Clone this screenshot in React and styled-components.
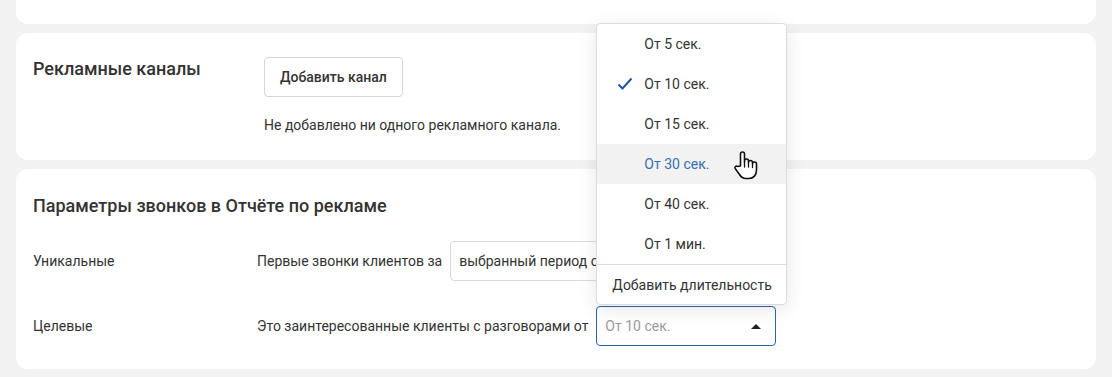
import React from 'react';
import styled, { createGlobalStyle } from 'styled-components';

const GlobalStyle = createGlobalStyle`
  body {
    margin: 0;
    background: #f1f2f1;
    font-family: Roboto, "Liberation Sans", sans-serif;
    color: #333;
  }
`;

const Page = styled.div`
  display: flex;
  flex-direction: column;
  gap: 9px;
  padding: 0 16px 9px;
  min-height: 377px;
  box-sizing: border-box;
  background: #f1f2f1;
`;

const TopCard = styled.div`
  height: 24px;
  background: #fff;
  border-radius: 0 0 12px 12px;
`;

const Card = styled.section`
  background: #fff;
  border-radius: 12px;
  padding: ${({ $pad }) => $pad};
`;

const ChannelsGrid = styled.div`
  display: grid;
  grid-template-columns: 231px 1fr;
`;

const Title = styled.h2`
  margin: 0;
  font-size: 18px;
  line-height: 24px;
  font-weight: 500;
  color: #333;
`;

const ChannelsBody = styled.div`
  display: flex;
  flex-direction: column;
  align-items: flex-start;
  gap: 18px;
`;

const Button = styled.button`
  height: 40px;
  padding: 0 15px;
  background: #fff;
  border: 1px solid #d6d6d6;
  border-radius: 4px;
  font-family: inherit;
  font-size: 14px;
  font-weight: 500;
  color: #333;
`;

const Text = styled.p`
  margin: 0;
  font-size: 14px;
  line-height: 20px;
  color: #333;
`;

const Rows = styled.div`
  display: flex;
  flex-direction: column;
  gap: 25px;
  margin-top: 23px;
`;

const Row = styled.div`
  display: grid;
  grid-template-columns: 224px 1fr;
  align-items: center;
  font-size: 14px;
`;

const Field = styled.div`
  display: flex;
  align-items: center;
  gap: 8px;
`;

const SelectWrap = styled.div`
  position: relative;
`;

const Select = styled.div`
  display: flex;
  align-items: center;
  justify-content: space-between;
  box-sizing: border-box;
  width: ${({ $width }) => $width}px;
  height: 40px;
  padding: 0 14px 0 8px;
  border: 1px solid ${({ $open }) => ($open ? '#2f62ad' : '#dadada')};
  border-radius: 4px;
  font-size: 14px;
  color: ${({ $placeholder }) => ($placeholder ? '#9a9a9a' : '#333')};
  white-space: nowrap;
  overflow: hidden;
`;

const Caret = styled.span`
  width: 0;
  height: 0;
  border-left: 5px solid transparent;
  border-right: 5px solid transparent;
  border-bottom: 5px solid #222;
`;

const Menu = styled.div`
  position: absolute;
  left: 0;
  bottom: calc(100% + 1px);
  box-sizing: border-box;
  width: 191px;
  background: #fff;
  border: 1px solid #dcdcdc;
  border-radius: 4px;
  box-shadow: 0 4px 18px rgba(0, 0, 0, 0.1);
  z-index: 5;
`;

const Option = styled.div`
  position: relative;
  height: 40px;
  display: flex;
  align-items: center;
  padding-left: 47px;
  font-size: 14px;
  color: ${({ $hover }) => ($hover ? '#3a6db3' : '#333')};
  background: ${({ $hover }) => ($hover ? '#f1f2f1' : 'transparent')};
`;

const Check = styled.svg`
  position: absolute;
  left: 20px;
  top: 13px;
`;

const AddRow = styled.div`
  height: 39px;
  display: flex;
  align-items: center;
  padding-left: 15px;
  border-top: 1px solid #dcdcdc;
  font-size: 14px;
  color: #333;
`;

const Cursor = styled.svg`
  position: absolute;
  left: 135px;
  top: 126px;
`;

const options = ['От 5 сек.', 'От 10 сек.', 'От 15 сек.', 'От 30 сек.', 'От 40 сек.', 'От 1 мин.'];

const HandCursor = () => (
  <Cursor width="26" height="30" viewBox="0 0 26 30">
    <path
      d="M8.5 16 V4 a2 2 0 0 1 4 0 V12 V11 a2 2 0 0 1 4 0 V12.5 a2 2 0 0 1 4 0 V14 a2 2 0 0 1 4 0 V20 c0 5 -3 8.5 -7.5 8.5 H14 c-3 0 -5 -1.5 -6.5 -4 L3.2 18.5 c-1 -1.5 0.8 -3.2 2.3 -2 Z"
      fill="#fff"
      stroke="#111"
      strokeWidth="1.6"
      strokeLinejoin="round"
    />
    <path d="M12.5 12 V17 M16.5 13 V17 M20.5 14.5 V17.5" stroke="#111" strokeWidth="1.3" strokeLinecap="round" />
  </Cursor>
);

const App = () => (
  <>
    <GlobalStyle />
    <Page>
      <TopCard />
      <Card $pad="24px 17px 25px">
        <ChannelsGrid>
          <Title>Рекламные каналы</Title>
          <ChannelsBody>
            <Button>Добавить канал</Button>
            <Text>Не добавлено ни одного рекламного канала.</Text>
          </ChannelsBody>
        </ChannelsGrid>
      </Card>
      <Card $pad="25px 17px 23px">
        <Title>Параметры звонков в Отчёте по рекламе</Title>
        <Rows>
          <Row>
            <span>Уникальные</span>
            <Field>
              <span>Первые звонки клиентов за</span>
              <Select $width={300}>
                выбранный период отчёта
                <Caret />
              </Select>
            </Field>
          </Row>
          <Row>
            <span>Целевые</span>
            <Field>
              <span>Это заинтересованные клиенты с разговорами от</span>
              <SelectWrap>
                <Select $width={180} $open $placeholder>
                  От 10 сек.
                  <Caret />
                </Select>
                <Menu>
                  {options.map((o, i) => (
                    <Option key={o} $hover={i === 3}>
                      {i === 1 && (
                        <Check width="16" height="14" viewBox="0 0 16 14">
                          <path d="M1.5 7.5 L5.5 11.5 L14.5 1.5" fill="none" stroke="#1f56a8" strokeWidth="2" />
                        </Check>
                      )}
                      {o}
                    </Option>
                  ))}
                  <AddRow>Добавить длительность</AddRow>
                  <HandCursor />
                </Menu>
              </SelectWrap>
            </Field>
          </Row>
        </Rows>
      </Card>
    </Page>
  </>
);

export default App;
